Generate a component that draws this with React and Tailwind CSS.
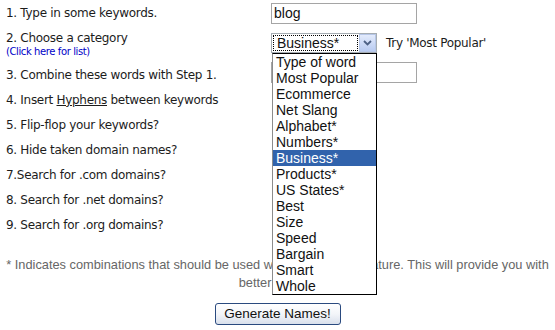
import React from "react";

const labelFont = { fontFamily: '"DejaVu Sans", Verdana, sans-serif' };

const items = [
  "Type of word",
  "Most Popular",
  "Ecommerce",
  "Net Slang",
  "Alphabet*",
  "Numbers*",
  "Business*",
  "Products*",
  "US States*",
  "Best",
  "Size",
  "Speed",
  "Bargain",
  "Smart",
  "Whole",
];

function Label({ children }) {
  return (
    <div className="w-[271px] shrink-0 pl-[6px] text-[12px] tracking-[-0.3px] text-[#1c1c1c]" style={labelFont}>
      {children}
    </div>
  );
}

function TextBox({ value }) {
  return (
    <div className="h-[21px] w-[146px] border border-[#a5a5a5] bg-white pl-[2px] text-[14px] leading-[19px] text-[#111] font-['Liberation_Sans',Arial,sans-serif]">
      {value}
    </div>
  );
}

export default function App() {
  return (
    <div className="relative h-[330px] w-[555px] overflow-hidden bg-white">
      {/* Row 1 */}
      <div className="flex h-[26px] items-center">
        <Label>1. Type in some keywords.</Label>
        <TextBox value="blog" />
      </div>

      {/* Row 2 */}
      <div className="relative z-10 flex h-[36px] items-start">
        <div className="w-[271px] shrink-0 pl-[6px] pt-[5px]" style={labelFont}>
          <div className="text-[12px] leading-[15px] tracking-[-0.3px] text-[#1c1c1c]">2. Choose a category</div>
          <div className="text-[10px] leading-[12px] tracking-[-0.4px] text-[#0000c8]">(Click here for list)</div>
        </div>
        <div className="mt-[7px] flex items-center">
          <div className="relative">
            <div className="flex h-[20px] w-[106px] border border-[#a5acb2] bg-white">
              <div className="m-[1px] flex flex-1 items-center border border-dotted border-black pl-[3px] text-[14px] leading-none text-[#111] font-['Liberation_Sans',Arial,sans-serif]">
                Business*
              </div>
              <div className="flex w-[17px] items-center justify-center border border-[#b7c7e8] bg-gradient-to-b from-[#e3ebfc] to-[#b9cbf1]">
                <svg width="9" height="6" viewBox="0 0 9 6">
                  <path d="M1 1 L4.5 4.5 L8 1" fill="none" stroke="#4d6185" strokeWidth="1.8" />
                </svg>
              </div>
            </div>
            {/* Open dropdown list */}
            <div className="absolute left-[1px] top-full w-[105px] border border-black border-l-[#8c8c8c] bg-white font-['Liberation_Sans',Arial,sans-serif]">
              {items.map((it) => (
                <div
                  key={it}
                  className={
                    it === "Business*"
                      ? "h-[16px] bg-[#3163ac] pl-[3px] text-[14px] leading-[16px] text-white"
                      : "h-[16px] pl-[3px] text-[14px] leading-[16px] text-[#111]"
                  }
                >
                  {it}
                </div>
              ))}
            </div>
          </div>
          <div className="ml-[9px] text-[12px] tracking-[-0.3px] text-[#1c1c1c]" style={labelFont}>
            Try 'Most Popular'
          </div>
        </div>
      </div>

      {/* Row 3 */}
      <div className="flex h-[25px] items-center">
        <Label>3. Combine these words with Step 1.</Label>
        <div className="self-start">
          <TextBox value="" />
        </div>
      </div>

      <div className="flex h-[25px] items-center">
        <Label>
          4. Insert <span className="underline">Hyphens</span> between keywords
        </Label>
      </div>
      <div className="flex h-[25px] items-center">
        <Label>5. Flip-flop your keywords?</Label>
      </div>
      <div className="flex h-[25px] items-center">
        <Label>6. Hide taken domain names?</Label>
      </div>
      <div className="flex h-[25px] items-center">
        <Label>7.Search for .com domains?</Label>
      </div>
      <div className="flex h-[25px] items-center">
        <Label>8. Search for .net domains?</Label>
      </div>
      <div className="flex h-[25px] items-center">
        <Label>9. Search for .org domains?</Label>
      </div>

      {/* Footnote */}
      <div className="mt-[19px] text-center text-[12.8px] leading-[18px] text-[#666] font-['Liberation_Sans',Arial,sans-serif] whitespace-nowrap">
        <div>* Indicates combinations that should be used with the Flip-flop feature. This will provide you with</div>
        <div>better results.</div>
      </div>

      {/* Button */}
      <div className="mt-[11px] flex justify-center">
        <button className="h-[22px] w-[126px] rounded-[3px] border border-[#2a4a7f] bg-gradient-to-b from-white via-[#f3f5f9] to-[#d9e0ec] text-[13.5px] leading-none text-[#111] font-['Liberation_Sans',Arial,sans-serif]">
          Generate Names!
        </button>
      </div>
    </div>
  );
}
